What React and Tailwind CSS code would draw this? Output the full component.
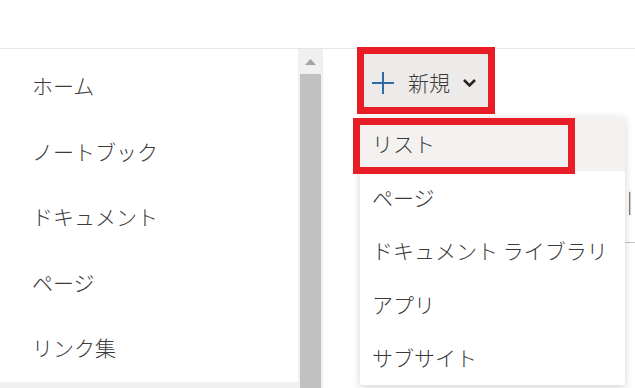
import React from "react";

const navItems = ["ホーム", "ノートブック", "ドキュメント", "ページ", "リンク集"];
const menuItems = ["リスト", "ページ", "ドキュメント ライブラリ", "アプリ", "サブサイト"];

export default function App() {
  return (
    <div
      className="relative w-[635px] h-[388px] overflow-hidden bg-white text-[#3b3a39] font-light"
      style={{ fontFamily: '"Noto Sans CJK JP", "Noto Sans", sans-serif' }}
    >
      {/* top bar */}
      <div className="h-[49px] border-b border-[#e6e6e6]" />

      <div className="flex h-[339px]">
        {/* left nav */}
        <div className="w-[298px] flex flex-col">
          <ul className="flex-1 pt-[4px]">
            {navItems.map((item) => (
              <li
                key={item}
                className="h-[65.5px] flex items-center pl-[32px] text-[21px] leading-none"
              >
                {item}
              </li>
            ))}
          </ul>
          <div className="h-[6px] bg-[#f0f0f0]" />
        </div>

        {/* scrollbar */}
        <div className="w-[25px] bg-[#f0f0f0] flex flex-col">
          <div className="h-[25px] flex items-center justify-center">
            <svg width="11" height="6" viewBox="0 0 11 6">
              <path d="M0 6 L5.5 0 L11 6 Z" fill="#a3a3a3" />
            </svg>
          </div>
          <div className="flex-1 mx-[2px] bg-[#c1c1c1]" />
        </div>

        {/* main area */}
        <div className="relative flex-1">
          <div className="mt-[-2px] ml-[34px] w-[138px] h-[67px] border-[7px] border-[#e81d25]">
            <div className="h-full bg-[#edebe9] flex items-center pl-[8px] pt-[4px]">
              <svg width="22" height="22" viewBox="0 0 22 22">
                <path d="M11 0 V22 M0 11 H22" stroke="#2f6ba8" strokeWidth="2" fill="none" />
              </svg>
              <span className="ml-[14px] text-[21px] leading-none">新規</span>
              <svg className="ml-[12px]" width="15" height="10" viewBox="0 0 15 10">
                <path d="M2 2 L7.5 7.5 L13 2" stroke="#252423" strokeWidth="2.6" fill="none" />
              </svg>
            </div>
          </div>

          {/* content behind the dropdown */}
          <div className="absolute left-[304px] top-[141px] text-[21px] leading-none">|</div>
          <div className="absolute left-[302px] top-[193px] w-[20px] h-px bg-[#c8c6c4]" />

          {/* dropdown */}
          <div className="absolute left-[37px] top-[68px] w-[265px] bg-white rounded-[2px] shadow-[0_2px_8px_rgba(0,0,0,0.18)]">
            {menuItems.map((item, i) => (
              <div
                key={item}
                className={`h-[53.5px] flex items-center pl-[12px] text-[21px] leading-none ${
                  i === 0 ? "bg-[#f3f2f1]" : ""
                }`}
              >
                {item}
              </div>
            ))}
            <div className="absolute left-[-7px] top-[1px] w-[222px] h-[56px] border-[7px] border-[#e81d25]" />
          </div>
        </div>
      </div>
    </div>
  );
}
